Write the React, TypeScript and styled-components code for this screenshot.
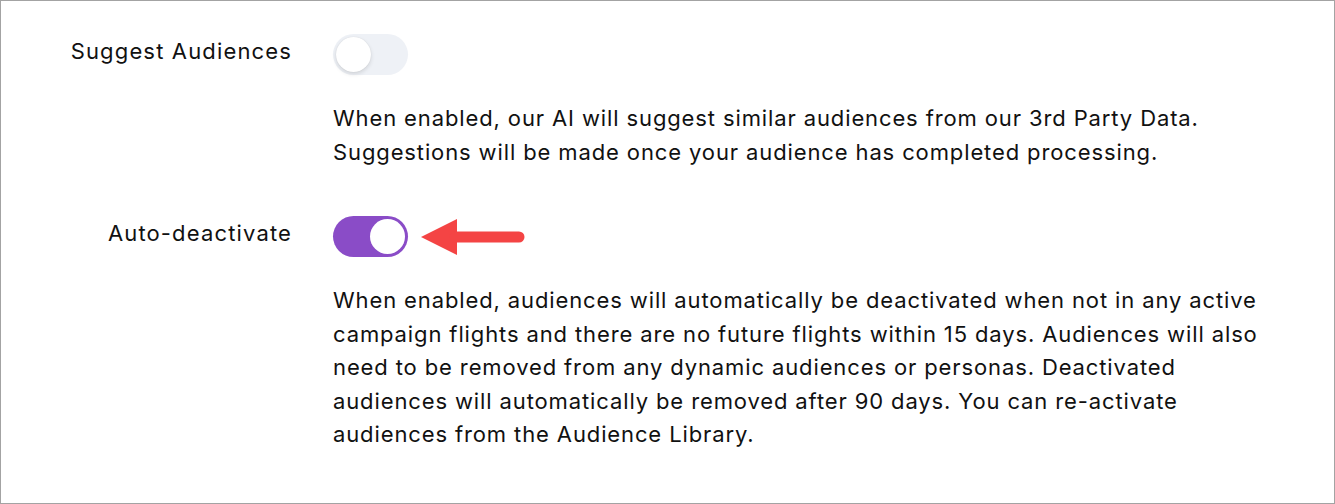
import React from "react";
import styled, { createGlobalStyle } from "styled-components";

const GlobalStyle = createGlobalStyle`
  html, body { margin: 0; padding: 0; background: #ffffff; }
  body { font-family: Inter, "Noto Sans", sans-serif; color: #111111; }
  * { box-sizing: border-box; }
`;

const Frame = styled.div`
  width: 1335px;
  height: 504px;
  border: 1px solid #a3a3a3;
  background: #ffffff;
  padding-top: 33px;
`;

const Setting = styled.section<{ $gapBelow?: number }>`
  display: grid;
  grid-template-columns: 291px 1fr;
  column-gap: 41px;
  row-gap: 27px;
  margin-bottom: ${(p) => p.$gapBelow ?? 0}px;
`;

const Label = styled.div`
  font-size: 22px;
  line-height: 41px;
  font-weight: 400;
  letter-spacing: 1.15px;
  text-align: right;
  margin-top: -3px;
`;

const ControlRow = styled.div`
  display: flex;
  align-items: center;
  gap: 13px;
  height: 41px;
`;

const Track = styled.button<{ $on: boolean }>`
  position: relative;
  width: 75px;
  height: 41px;
  border: none;
  padding: 0;
  border-radius: 21px;
  background: ${(p) => (p.$on ? "#8a4cc7" : "#eef1f6")};
  cursor: pointer;
  flex: none;
`;

const Knob = styled.span<{ $on: boolean }>`
  position: absolute;
  top: 3px;
  left: ${(p) => (p.$on ? "37px" : "3px")};
  width: 35px;
  height: 35px;
  border-radius: 50%;
  background: #ffffff;
  box-shadow: ${(p) =>
    p.$on ? "none" : "0 2px 4px rgba(0, 0, 0, 0.12), 0 0 1px rgba(0,0,0,0.12)"};
`;

const Empty = styled.div``;

const Description = styled.p`
  margin: 0;
  font-size: 22px;
  line-height: 33.5px;
  letter-spacing: 0.88px;
  max-width: 935px;
`;

const Arrow = () => (
  <svg width="104" height="36" viewBox="0 0 104 36" aria-hidden>
    <path d="M0 18 L36 0 L36 36 Z" fill="#f44444" />
    <line x1="34" y1="18" x2="98" y2="18" stroke="#f44444" strokeWidth="11" strokeLinecap="round" />
  </svg>
);

const Toggle = ({ on }: { on: boolean }) => (
  <Track $on={on} role="switch" aria-checked={on}>
    <Knob $on={on} />
  </Track>
);

export default function App() {
  return (
    <>
      <GlobalStyle />
      <Frame>
        <Setting $gapBelow={47}>
          <Label>Suggest Audiences</Label>
          <ControlRow>
            <Toggle on={false} />
          </ControlRow>
          <Empty />
          <Description>
            When enabled, our AI will suggest similar audiences from our 3rd Party Data.
            Suggestions will be made once your audience has completed processing.
          </Description>
        </Setting>
        <Setting>
          <Label>Auto-deactivate</Label>
          <ControlRow>
            <Toggle on={true} />
            <Arrow />
          </ControlRow>
          <Empty />
          <Description>
            When enabled, audiences will automatically be deactivated when not in any active
            campaign flights and there are no future flights within 15 days. Audiences will also
            need to be removed from any dynamic audiences or personas. Deactivated audiences will
            automatically be removed after 90 days. You can re-activate audiences from the
            Audience Library.
          </Description>
        </Setting>
      </Frame>
    </>
  );
}
